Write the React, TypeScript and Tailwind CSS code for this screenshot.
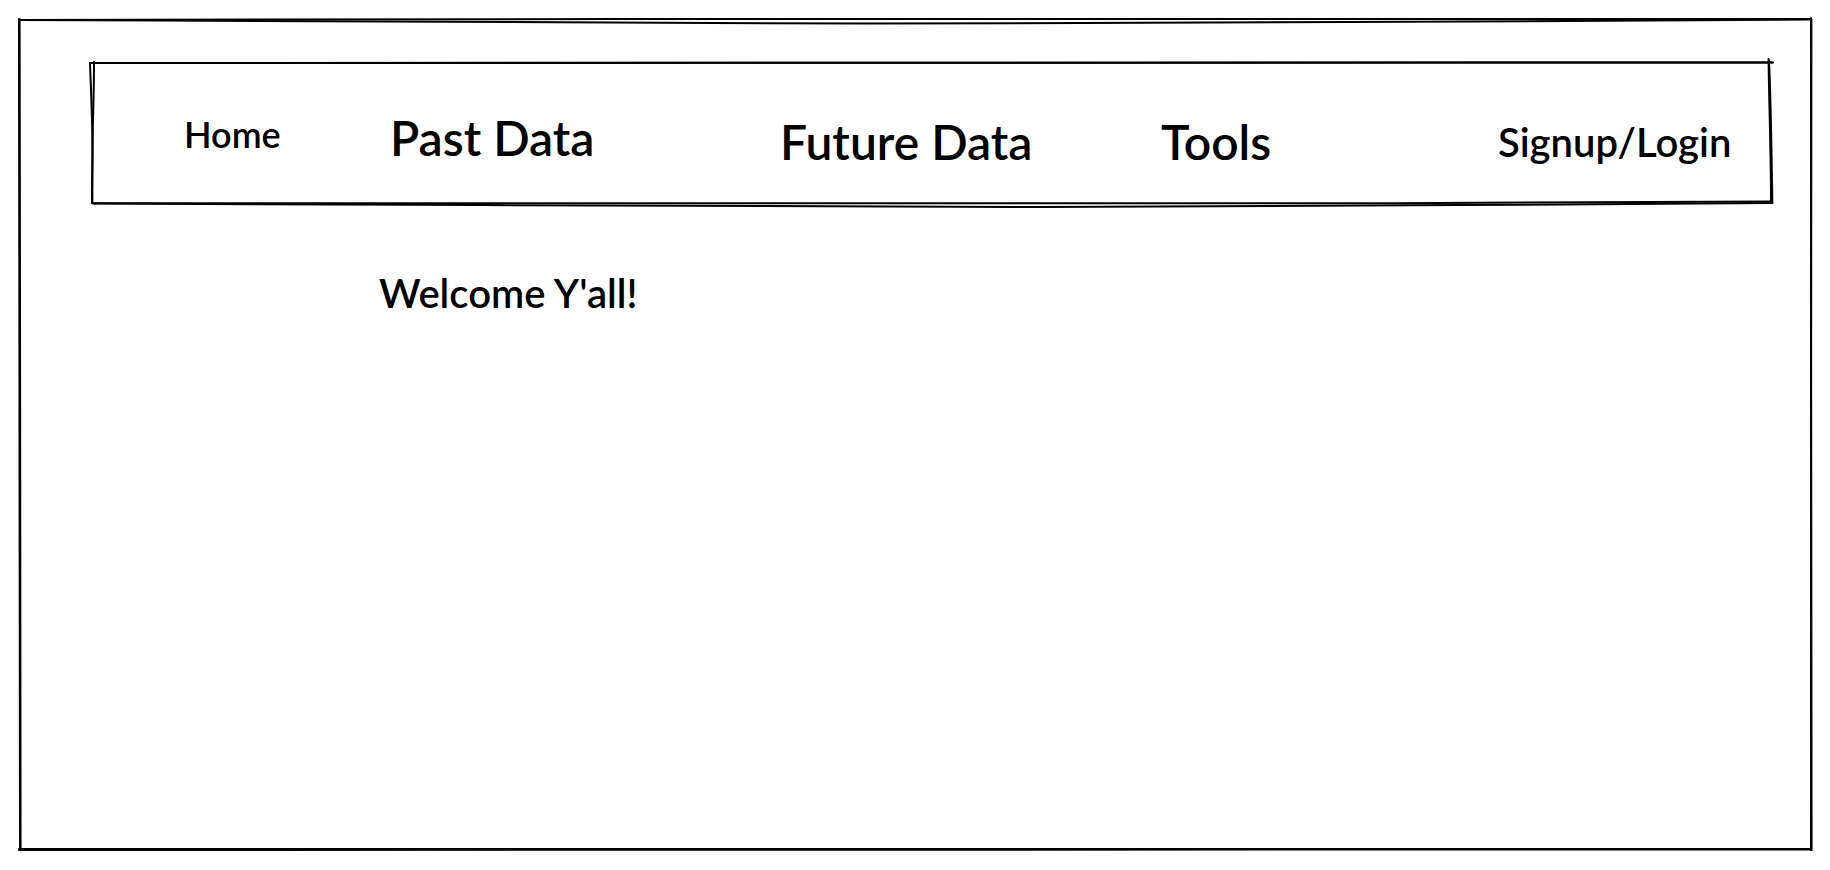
import type { ReactNode } from 'react';

type SketchBoxProps = {
  viewBox: string;
  strokes: string[];
};

function SketchBorder({ viewBox, strokes }: SketchBoxProps) {
  return (
    <svg
      aria-hidden="true"
      viewBox={viewBox}
      preserveAspectRatio="none"
      className="pointer-events-none absolute inset-0 h-full w-full overflow-visible"
      fill="none"
      stroke="#000"
      strokeWidth="2"
      strokeLinecap="round"
    >
      {strokes.map((d) => (
        <path key={d} d={d} vectorEffect="non-scaling-stroke" />
      ))}
    </svg>
  );
}

const pageStrokes = [
  'M1 2 C200 1.6 400 1 600 1 S1500 1 1793 1',
  'M1 2 C250 2.6 450 5.6 850 5.6 S1400 3 1793 1.6',
  'M1 1 C1 200 2 400 2 832',
  'M1.6 1 C2 300 2.4 500 2.6 832',
  'M1793 0 C1793 300 1793 500 1793 832',
  'M1793.4 1 C1793 300 1793 500 1793.6 832',
  'M1 831 H1000 L1793 831',
  'M1 832 C400 832 1000 832 1793 831.4',
];

const navStrokes = [
  'M-1 1 C500 1 1100 0.6 1682 0.4',
  'M0 1 C500 0.6 1100 0.6 1681 0.6',
  'M-1 1 C0 30 1.5 60 1.5 90 S1 125 1 141',
  'M3 0 C3 30 2 50 1.6 80 S1 120 1.4 141',
  'M1677.6 -3 C1678 40 1680 90 1680 141',
  'M1678 -1 C1680 40 1680.6 100 1681.4 141',
  'M2 141.2 H1300 L1680 139.4',
  'M2 141.6 C350 142 550 145 950 145 S1350 142 1681 141',
];

function NavLink({ href, className, children }: { href: string; className: string; children: ReactNode }) {
  return (
    <a href={href} className={`whitespace-nowrap ${className}`}>
      {children}
    </a>
  );
}

export default function App() {
  return (
    <div className="flex min-h-screen flex-col bg-white px-[18px] pt-[18px] pb-5 font-['Lato',sans-serif] text-[40px] leading-12 font-semibold text-black">
      <div className="relative flex-1">
        <SketchBorder viewBox="0 0 1794 832" strokes={pageStrokes} />
        <header className="relative mt-11 mr-[41px] ml-[73px]">
          <SketchBorder viewBox="0 0 1680 141" strokes={navStrokes} />
          <nav
            aria-label="Main"
            className="relative grid h-[141px] grid-cols-[206fr_390fr_381fr_337fr_273fr] items-start pt-12 pl-[93px]"
          >
            <NavLink href="#home" className="text-[36px]">Home</NavLink>
            <NavLink href="#past-data" className="pt-1 text-[48px]">Past Data</NavLink>
            <NavLink href="#future-data" className="pt-2 text-[48px]">Future Data</NavLink>
            <NavLink href="#tools" className="pt-2 text-[48px]">Tools</NavLink>
            <NavLink href="#signup" className="pt-2 text-[40px]">Signup/Login</NavLink>
          </nav>
        </header>
        <main className="pt-[66px] pl-[361px]">
          <h1 className="text-[40px] leading-12">Welcome Y'all!</h1>
        </main>
      </div>
    </div>
  );
}
